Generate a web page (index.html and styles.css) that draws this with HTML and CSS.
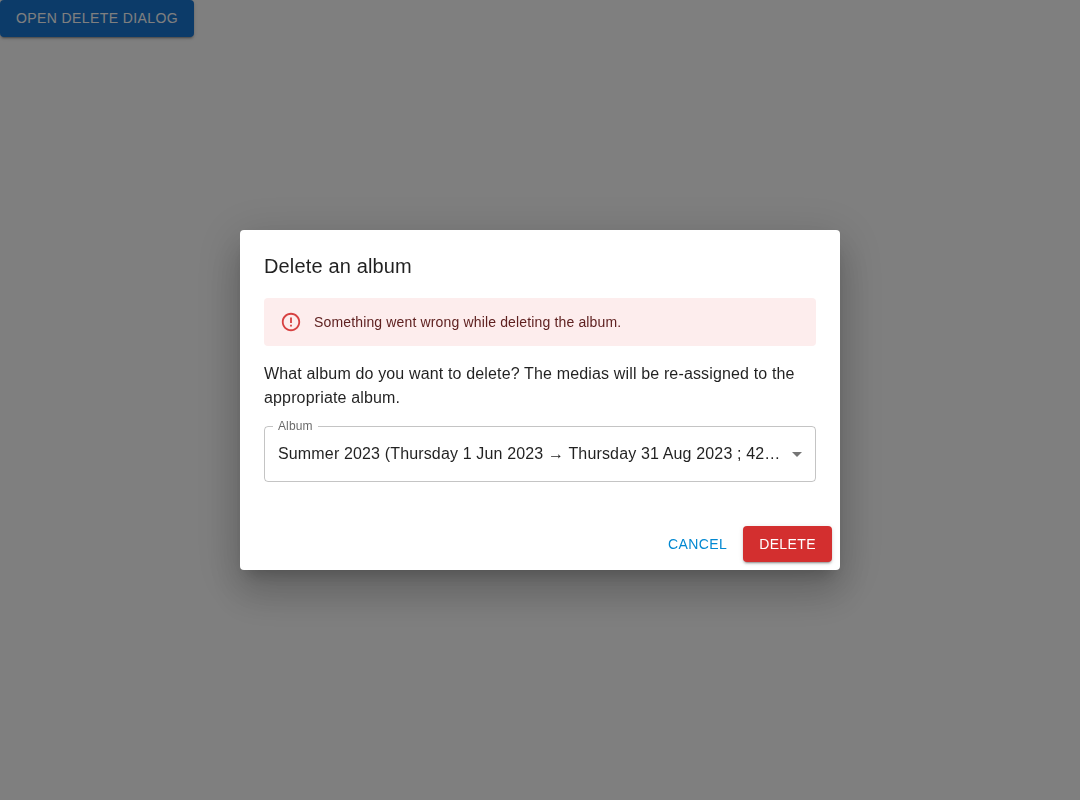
FILE: index.html
```html
<!DOCTYPE html>
<html lang="en">
<head>
<meta charset="utf-8">
<title>Delete an album</title>
<link rel="stylesheet" href="styles.css">
</head>
<body>
<button class="button button-open" type="button">Open delete dialog</button>
<div class="backdrop">
  <section class="dialog" role="dialog" aria-labelledby="dialog-title">
    <h2 class="dialog-title" id="dialog-title">Delete an album</h2>
    <div class="dialog-content">
      <div class="alert" role="alert">
        <svg class="alert-icon" viewBox="0 0 24 24" aria-hidden="true"><path d="M11 15h2v2h-2zm0-8h2v6h-2zm.99-5C6.47 2 2 6.48 2 12s4.47 10 9.99 10C17.52 22 22 17.52 22 12S17.52 2 11.99 2zM12 20c-4.42 0-8-3.58-8-8s3.58-8 8-8 8 3.58 8 8-3.58 8-8 8z"/></svg>
        <span class="alert-message">Something went wrong while deleting the album.</span>
      </div>
      <p class="dialog-text">What album do you want to delete? The medias will be re-assigned to the appropriate album.</p>
      <fieldset class="select">
        <legend class="select-label">Album</legend>
        <div class="select-row">
          <span class="select-value">Summer 2023 (Thursday 1 Jun 2023 → Thursday 31 Aug 2023 ; 42…</span>
          <svg class="select-icon" viewBox="0 0 24 24" aria-hidden="true"><path d="M7 10l5 5 5-5z"/></svg>
        </div>
      </fieldset>
    </div>
    <div class="dialog-actions">
      <button class="button button-cancel" type="button">Cancel</button>
      <button class="button button-delete" type="button">Delete</button>
    </div>
  </section>
</div>
</body>
</html>
```
FILE: styles.css
```css
* {
  box-sizing: border-box;
}

body {
  margin: 0;
  height: 100vh;
  overflow: hidden;
  background: #fff;
  color: rgba(0, 0, 0, 0.87);
  font-family: "Liberation Sans", Arial, sans-serif;
  font-size: 16px;
  line-height: 24px;
  letter-spacing: 0.15008px;
}

.button {
  display: inline-flex;
  align-items: center;
  justify-content: center;
  min-width: 64px;
  border: 0;
  border-radius: 4px;
  background: transparent;
  font: 500 14px/24.5px "Liberation Sans", Arial, sans-serif;
  letter-spacing: 0.4px;
  text-transform: uppercase;
}

.button-open,
.button-delete {
  padding: 6px 16px;
  color: #fff;
  box-shadow: 0 3px 1px -2px rgba(0, 0, 0, 0.2), 0 2px 2px 0 rgba(0, 0, 0, 0.14), 0 1px 5px 0 rgba(0, 0, 0, 0.12);
}

.button-open {
  background: #1976d2;
}

.button-cancel {
  padding: 6px 8px;
  color: #0288d1;
}

.button-delete {
  background: #d32f2f;
}

.backdrop {
  position: fixed;
  inset: 0;
  display: flex;
  align-items: center;
  justify-content: center;
  background: rgba(0, 0, 0, 0.5);
}

.dialog {
  width: 600px;
  border-radius: 4px;
  background: #fff;
  box-shadow: 0 11px 15px -7px rgba(0, 0, 0, 0.2), 0 24px 38px 3px rgba(0, 0, 0, 0.14), 0 9px 46px 8px rgba(0, 0, 0, 0.12);
}

.dialog-title {
  margin: 0;
  padding: 20px 24px 16px;
  font-size: 20px;
  font-weight: 500;
  line-height: 32px;
}

.dialog-content {
  padding: 0 24px 36px;
}

.alert {
  display: flex;
  align-items: center;
  height: 48px;
  padding: 0 16px;
  border-radius: 4px;
  background: #fdeded;
  color: #5f2120;
  font-size: 14px;
  line-height: 20px;
}

.alert-icon {
  width: 22px;
  height: 22px;
  margin-right: 12px;
  fill: #d32f2f;
  opacity: 0.9;
}

.dialog-text {
  margin: 16px 0 11px;
}

.select {
  min-width: 0;
  height: 61px;
  margin: 0;
  padding: 0 6px 0 8px;
  border: 1px solid rgba(0, 0, 0, 0.23);
  border-radius: 4px;
}

.select-label {
  padding: 0 5px;
  color: rgba(0, 0, 0, 0.6);
  font-size: 12px;
  line-height: 11px;
  letter-spacing: 0.11px;
}

.select-row {
  display: flex;
  align-items: center;
  height: 44px;
  padding-left: 5px;
}

.select-value {
  flex: 1;
  white-space: nowrap;
}

.select-icon {
  flex: none;
  width: 24px;
  height: 24px;
  fill: rgba(0, 0, 0, 0.54);
}

.dialog-actions {
  display: flex;
  justify-content: flex-end;
  gap: 8px;
  padding: 8px;
}
```
